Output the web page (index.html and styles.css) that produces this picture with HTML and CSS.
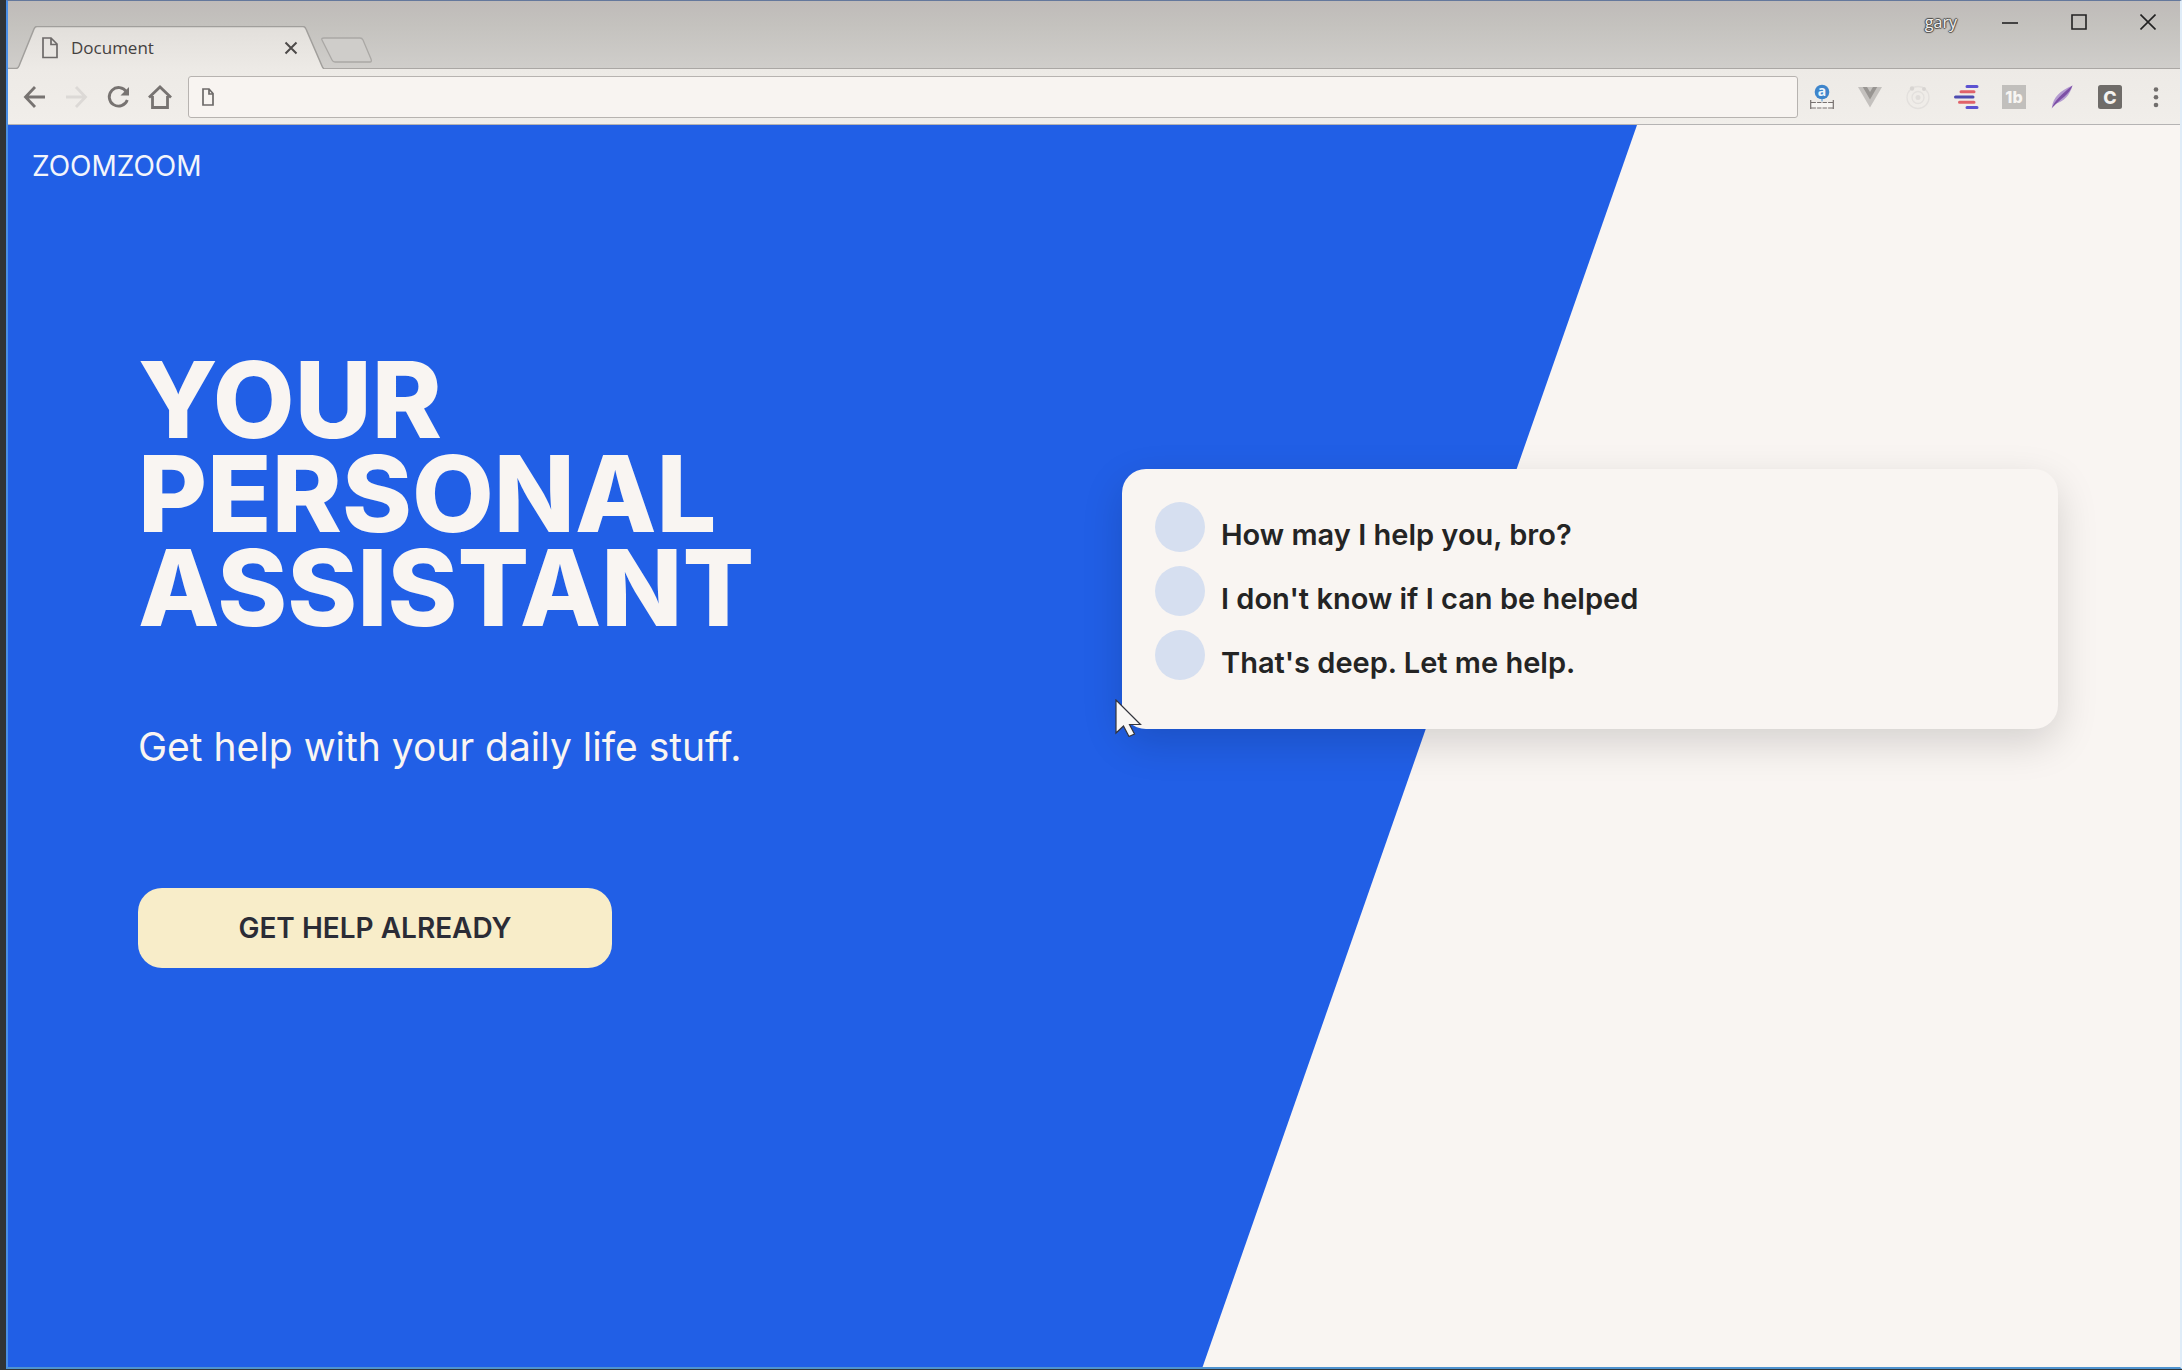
FILE: index.html
```
<!DOCTYPE html>
<html lang="en">
<head>
<meta charset="utf-8">
<meta name="viewport" content="width=device-width, initial-scale=1">
<title>Document</title>
<link rel="stylesheet" href="styles.css">
</head>
<body>
<div class="window">
  <div class="titlebar">
    <div class="tab">
      <svg class="tab-shape" viewBox="0 0 316 43" aria-hidden="true">
        <defs><linearGradient id="tabfill" x1="0" y1="0" x2="0" y2="1"><stop offset="0" stop-color="#e2dfdb"/><stop offset="1" stop-color="#edeae6"/></linearGradient></defs>
        <path d="M0 43V42.500H8.500Q10 42 11 40L26 3Q27 .5 29 .5H295Q297 .5 298 3L314 40Q315 42.500 316 42.500V43Z" fill="url(#tabfill)"/>
        <path d="M0 42.500H8.500Q10 42 11 40L26 3Q27 .5 29 .5H295Q297 .5 298 3L314 40Q315 42.500 316 42.500" fill="none" stroke="#a19f9c" stroke-width="1.500"/>
      </svg>
      <svg class="tab-icon" viewBox="0 0 16 22" aria-hidden="true"><path d="M1 1H9L15 7V20.500H1ZM9 1V7.500H15" fill="none" stroke="#6d6a69" stroke-width="1.700"/></svg>
      <span class="tab-title">Document</span>
      <button class="tab-close" aria-label="Close tab"><svg viewBox="0 0 14 14"><path d="M1.500 1.500L12.500 12.500M12.500 1.500L1.500 12.500" stroke="#4d4a49" stroke-width="2"/></svg></button>
    </div>
    <button class="new-tab" aria-label="New tab"><svg viewBox="0 0 52 26"><path d="M3 1H39Q41 1 42 3L50 22Q51 25 49 25H14Q12 25 11 23L1 3Q0 1 3 1Z" fill="#cfcdca" stroke="#aaa8a5" stroke-width="1.300"/></svg></button>
    <div class="controls">
      <span class="user">gary</span>
      <button aria-label="Minimize"><svg viewBox="0 0 16 16"><path d="M0 9H16" stroke="#222" stroke-width="1.600"/></svg></button>
      <button aria-label="Maximize"><svg viewBox="0 0 16 16"><path d="M1 1H15V15H1Z" fill="none" stroke="#222" stroke-width="1.600"/></svg></button>
      <button aria-label="Close"><svg viewBox="0 0 16 16"><path d="M.5 .5L15.500 15.500M15.500 .5L.5 15.500" stroke="#222" stroke-width="1.600"/></svg></button>
    </div>
  </div>

  <div class="toolbar">
    <div class="nav-buttons">
      <button aria-label="Back"><svg viewBox="0 0 24 24"><path d="M13 2L3.500 12L13 22M3.500 12H23" fill="none" stroke="#777371" stroke-width="2.800"/></svg></button>
      <button aria-label="Forward" disabled><svg viewBox="0 0 24 24"><path d="M12 2L21.500 12L12 22M21.500 12H2" fill="none" stroke="#dcd9d6" stroke-width="2.800"/></svg></button>
      <button aria-label="Reload"><svg viewBox="0 0 24 24"><path d="M20.500 7A9.300 9.300 0 1 0 21.300 15" fill="none" stroke="#777371" stroke-width="2.800"/><path d="M23 2V10.500H14.500Z" fill="#777371"/></svg></button>
      <button aria-label="Home"><svg viewBox="0 0 24 24"><path d="M1 12.500L12 2L23 12.500M4.500 11V22.500H19.500V11" fill="none" stroke="#777371" stroke-width="2.800"/></svg></button>
    </div>
    <div class="address">
      <svg viewBox="0 0 12 18" aria-hidden="true"><path d="M1 1H7L11 5.500V17H1ZM7 1V6H11" fill="none" stroke="#6d6a69" stroke-width="1.700"/></svg>
      <input type="text" aria-label="Address">
    </div>
    <div class="extensions">
      <button aria-label="Ruler extension"><svg viewBox="0 0 24 24"><circle cx="12" cy="7" r="7.300" fill="#3f85cb"/><text x="12" y="11" text-anchor="middle" class="glyph-a">a</text><path d="M12 14V17" stroke="#7fb0dc" stroke-width="1.500"/><path d="M1 17.500H23V23H1Z" fill="#f7f5f2"/><path d="M.7 15V24M23.300 15V24M1 17.500H23M1 23H23" stroke="#77716f" stroke-width="1.200" fill="none"/><path d="M6.500 16V18M12 16V18M17.500 16V18M6.500 22V24M12 22V24M17.500 22V24" stroke="#f0edea" stroke-width="1.200"/></svg></button>
      <button aria-label="Vue extension"><svg viewBox="0 0 24 24"><path d="M0 2H24L12 22.500Z" fill="#c4c1be"/><path d="M4.800 2H9L12 7L15 2H19.200L12 14.500Z" fill="#989592"/></svg></button>
      <button aria-label="Orbit extension"><svg viewBox="0 0 24 24"><g fill="none" stroke="#e3e0dd" stroke-width="1.300"><circle cx="12" cy="12.500" r="11"/><circle cx="12" cy="12.500" r="6"/></g><circle cx="12" cy="12.500" r="2.500" fill="#e0ddda"/><circle cx="6" cy="3.500" r="2.200" fill="#d8d5d2"/><circle cx="18" cy="4" r="2" fill="#d8d5d2"/></svg></button>
      <button aria-label="Stripes extension"><svg viewBox="0 0 24 24"><path d="M13 1.500H23M13 22.500H23" stroke="#5c52d1" stroke-width="3" stroke-linecap="round"/><path d="M7 6.700H20M5.500 17.300H20" stroke="#e0626a" stroke-width="3" stroke-linecap="round"/><path d="M1.500 12H19" stroke="#4d4bb0" stroke-width="3" stroke-linecap="round"/></svg></button>
      <button aria-label="1b extension"><svg viewBox="0 0 24 24"><path d="M0 0H24V24H0Z" fill="#c1bfbc"/><text x="12" y="18" text-anchor="middle" class="glyph-tb">1b</text></svg></button>
      <button aria-label="Feather extension"><svg viewBox="0 0 24 24"><path d="M2 22.500C3 12 10 6 22.500 .5C20 10 14 17 4.500 19Z" fill="#b49bd0"/><path d="M1.500 23.500C5 15 12 9 22.500 .5C19 10 11 13 1.500 23.500Z" fill="#7d4fa6"/></svg></button>
      <button aria-label="C extension"><svg viewBox="0 0 24 24"><rect width="24" height="24" rx="2.500" fill="#6f6c69"/><text x="12" y="18.500" text-anchor="middle" class="glyph-c">C</text></svg></button>
      <button class="menu" aria-label="Menu"><svg viewBox="0 0 20 24"><g fill="#716e6c"><circle cx="10" cy="4.500" r="2.300"/><circle cx="10" cy="12.300" r="2.300"/><circle cx="10" cy="20" r="2.300"/></g></svg></button>
    </div>
  </div>

  <div class="page">
    <header class="site-header"><a class="logo" href="#">ZOOMZOOM</a></header>
    <main class="hero">
      <section class="copy">
        <h1>YOUR<br>PERSONAL<br>ASSISTANT</h1>
        <p>Get help with your daily life stuff.</p>
        <button class="cta">GET HELP ALREADY</button>
      </section>
      <section class="chat">
        <ul>
          <li><span class="avatar"></span><span class="message">How may I help you, bro?</span></li>
          <li><span class="avatar"></span><span class="message">I don't know if I can be helped</span></li>
          <li><span class="avatar"></span><span class="message">That's deep. Let me help.</span></li>
        </ul>
        <svg class="cursor" viewBox="0 0 27 38" aria-hidden="true"><path d="M1 1V34L8.500 27L14 37.500L19.500 35L14.500 25.500H25.500Z" fill="#f9f7f5" stroke="#34353d" stroke-width="1.200"/></svg>
      </section>
    </main>
  </div>
</div>
</body>
</html>
```
FILE: styles.css
```
* { box-sizing: border-box; }

body {
  margin: 0;
  padding: 0 0 1px 6px;
  min-height: 100vh;
  display: flex;
  background: #303437;
  font-family: Inter, "Liberation Sans", sans-serif;
}

button {
  padding: 0;
  border: 0;
  background: none;
  font: inherit;
  color: inherit;
}

svg { display: block; }

.window {
  flex: 1;
  display: flex;
  flex-direction: column;
  border: 2px solid #dfecf8;
  border-top: 1px solid #64789c;
  border-left-color: #4a8fe6;
  border-bottom-color: #4f93cf;
}

/* Title bar */
.titlebar {
  height: 68px;
  display: flex;
  align-items: flex-end;
  background: linear-gradient(#bfbbb9, #c4c2be 35%, #d0cecb);
  box-shadow: inset 0 -1px #aaa7a4;
  font-family: "Open Sans", "Noto Sans", sans-serif;
}

.tab {
  position: relative;
  width: 316px;
  height: 43px;
  padding: 0 26px 0 34px;
  display: flex;
  align-items: center;
  gap: 13px;
}

.tab-shape {
  position: absolute;
  inset: 0;
  width: 316px;
  height: 43px;
}

.tab-icon, .tab-title, .tab-close { position: relative; }
.tab-icon { width: 16px; height: 22px; }
.tab-title { flex: 1; font-size: 17px; line-height: 24px; color: #44413f; }
.tab-close svg { width: 14px; height: 14px; }

.new-tab { margin-bottom: 6px; margin-left: -3px; }
.new-tab svg { width: 52px; height: 26px; }

.controls {
  align-self: flex-start;
  height: 42px;
  margin-left: auto;
  padding-right: 24px;
  display: flex;
  align-items: center;
  gap: 53px;
}
.controls svg { width: 16px; height: 16px; }

.user {
  margin-right: -8px;
  font-size: 16px;
  line-height: 24px;
  color: #f1efed;
  text-shadow: 1px 0 1px #4b4947, -1px 0 1px #4b4947, 0 1px 1px #4b4947, 0 -1px 1px #4b4947;
}

/* Toolbar */
.toolbar {
  height: 56px;
  padding: 0 14px;
  display: flex;
  align-items: center;
  gap: 16px;
  background: linear-gradient(#edeae6, #f1eeea);
  border-bottom: 1px solid #b5b3b3;
}
.nav-buttons { display: flex; gap: 18px; }
.nav-buttons svg { width: 24px; height: 24px; }

.address {
  flex: 1;
  height: 42px;
  margin-right: -4px;
  padding: 0 13px;
  display: flex;
  align-items: center;
  gap: 12px;
  background: #f8f4f1;
  border: 1px solid #b7b3b0;
  border-radius: 3px;
}
.address svg { width: 12px; height: 18px; }
.address input {
  flex: 1;
  min-width: 0;
  border: 0;
  outline: 0;
  background: transparent;
  font: 18px "Open Sans", sans-serif;
}

.extensions { display: flex; gap: 24px; }
.extensions svg { width: 24px; height: 24px; overflow: visible; }
.extensions .menu svg { width: 20px; }
.glyph-a { font: 700 14px "Open Sans", sans-serif; fill: #eef5fb; }
.glyph-tb { font: 800 16px Inter, sans-serif; fill: #f7f5f2; }
.glyph-c { font: 800 18px Inter, sans-serif; fill: #f4f2ef; }

/* Page */
.page {
  position: relative;
  z-index: 0;
  flex: 1;
  background: #f9f5f2;
}
.page::before {
  content: "";
  position: absolute;
  z-index: -1;
  inset: 0;
  background: #215fe6;
  clip-path: polygon(0 0, 75% 0, 55% 100%, 0 100%);
}

.site-header { padding: 24px; }
.logo {
  display: block;
  font-size: 28px;
  line-height: 34px;
  color: #f3f5fb;
  text-decoration: none;
}

.hero {
  padding: 0 122px 0 130px;
  display: grid;
  grid-template-columns: 41fr 39fr;
  align-items: start;
}

.copy { padding: 146px 0 64px; color: #f9f5f2; }
.copy h1 {
  margin: 0;
  font-size: 106px;
  line-height: 94px;
  font-weight: 800;
}
.copy p {
  margin: 88px 0 118px;
  font-size: 39px;
  line-height: 47px;
}
.cta {
  width: 474px;
  height: 80px;
  border-radius: 24px;
  background: #f8edc9;
  color: #2b2c36;
  font-size: 28px;
  font-weight: 600;
}

.chat {
  position: relative;
  margin-top: 262px;
  padding: 33px 33px 49px;
  border-radius: 24px;
  background: #f9f5f2;
  box-shadow: 0 14px 40px rgba(0, 0, 0, .15);
}
.chat ul {
  margin: 0;
  padding: 0;
  display: grid;
  gap: 14px;
  list-style: none;
}
.chat li { display: flex; gap: 16px; }
.avatar {
  width: 50px;
  height: 50px;
  border-radius: 50%;
  background: #d6dff0;
}
.message {
  padding-top: 16px;
  font-size: 29px;
  line-height: 34px;
  font-weight: 600;
  color: #242424;
}
.cursor {
  position: absolute;
  left: -7px;
  top: 230px;
  width: 27px;
  height: 38px;
}
```
